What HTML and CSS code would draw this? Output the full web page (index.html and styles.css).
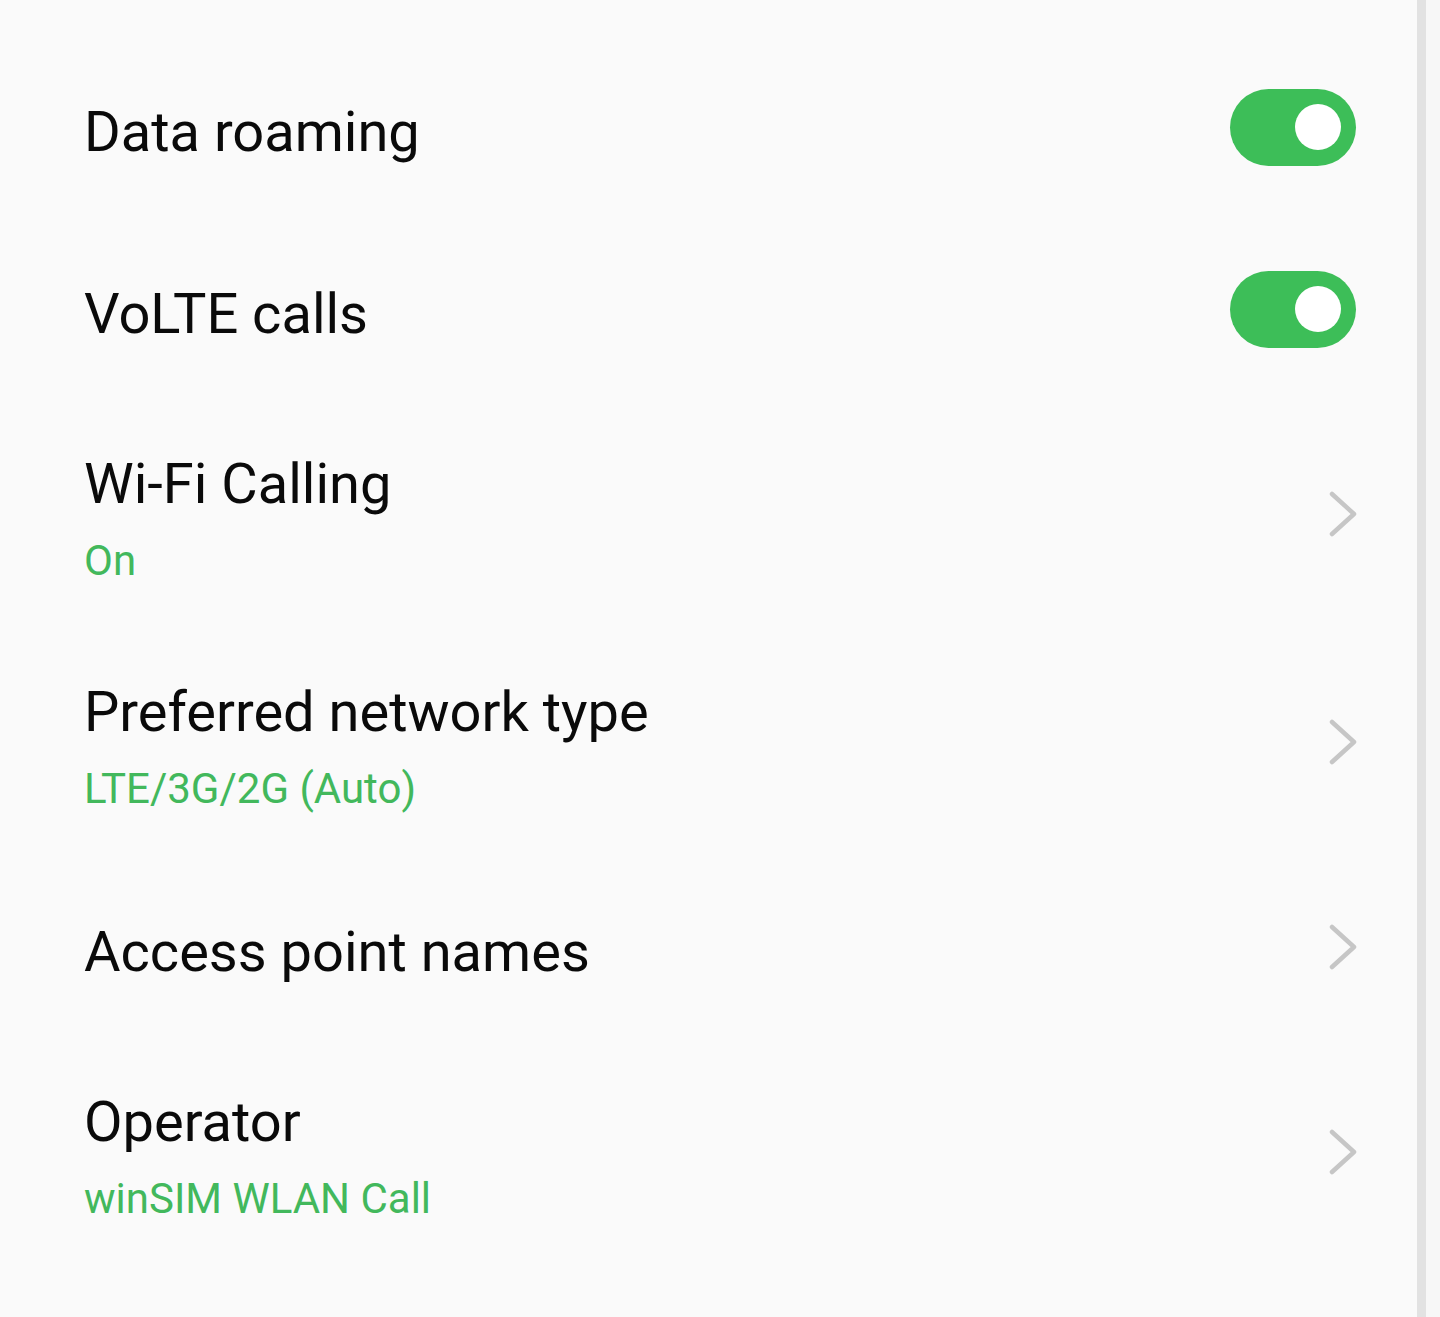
FILE: index.html
```html
<!DOCTYPE html>
<html lang="en">
<head>
  <meta charset="UTF-8" />
  <meta name="viewport" content="width=device-width, initial-scale=1.0" />
  <title>SIM settings</title>
  <link rel="stylesheet" href="styles.css">
</head>
<body>
  <div class="screen">
    <main class="settings">
      <div class="row">
        <div class="text">
          <div class="title">Data roaming</div>
        </div>
        <span class="switch on"><span class="knob"></span></span>
      </div>

      <div class="row">
        <div class="text">
          <div class="title">VoLTE calls</div>
        </div>
        <span class="switch on"><span class="knob"></span></span>
      </div>

      <div class="row two-line">
        <div class="text">
          <div class="title">Wi-Fi Calling</div>
          <div class="summary">On</div>
        </div>
        <svg class="chevron" viewBox="0 0 28 46" width="28" height="46">
          <path d="M3 3 L25 23 L3 43" />
        </svg>
      </div>

      <div class="row two-line">
        <div class="text">
          <div class="title">Preferred network type</div>
          <div class="summary">LTE/3G/2G (Auto)</div>
        </div>
        <svg class="chevron" viewBox="0 0 28 46" width="28" height="46">
          <path d="M3 3 L25 23 L3 43" />
        </svg>
      </div>

      <div class="row">
        <div class="text">
          <div class="title">Access point names</div>
        </div>
        <svg class="chevron" viewBox="0 0 28 46" width="28" height="46">
          <path d="M3 3 L25 23 L3 43" />
        </svg>
      </div>

      <div class="row two-line">
        <div class="text">
          <div class="title">Operator</div>
          <div class="summary">winSIM WLAN Call</div>
        </div>
        <svg class="chevron" viewBox="0 0 28 46" width="28" height="46">
          <path d="M3 3 L25 23 L3 43" />
        </svg>
      </div>
    </main>
    <div class="scrollbar"></div>
  </div>
</body>
</html>
```

FILE: styles.css
```css
html, body {
  margin: 0;
  padding: 0;
  height: 100%;
}
body {
  font-family: Roboto, "Noto Sans", sans-serif;
  background-color: #fafafa;
  color: #0a0a0a;
}
.screen {
  display: flex;
  height: 1317px;
}
.settings {
  flex: 1;
  padding: 36px 61px 0 84px;
}
.row {
  display: flex;
  align-items: center;
  justify-content: space-between;
  height: 182px;
}
.row.two-line {
  height: 228px;
}
.text {
  padding-top: 9px;
}
.title {
  font-size: 56px;
  line-height: 64px;
}
.summary {
  margin-top: 21px;
  font-size: 42px;
  line-height: 48px;
  color: #42b85c;
}
.switch {
  display: flex;
  align-items: center;
  justify-content: flex-end;
  width: 126px;
  height: 77px;
  padding: 0 15px;
  box-sizing: border-box;
  border-radius: 39px;
  background-color: #3dbe58;
}
.knob {
  width: 46px;
  height: 46px;
  border-radius: 50%;
  background-color: #fff;
}
.chevron {
  margin-right: -1px;
}
.chevron path {
  fill: none;
  stroke: #c6c6c6;
  stroke-width: 4.5;
  stroke-linecap: round;
  stroke-linejoin: round;
}
.scrollbar {
  width: 9px;
  background-color: #e2e2e2;
  border-right: 14px solid #f7f7f7;
}
```
